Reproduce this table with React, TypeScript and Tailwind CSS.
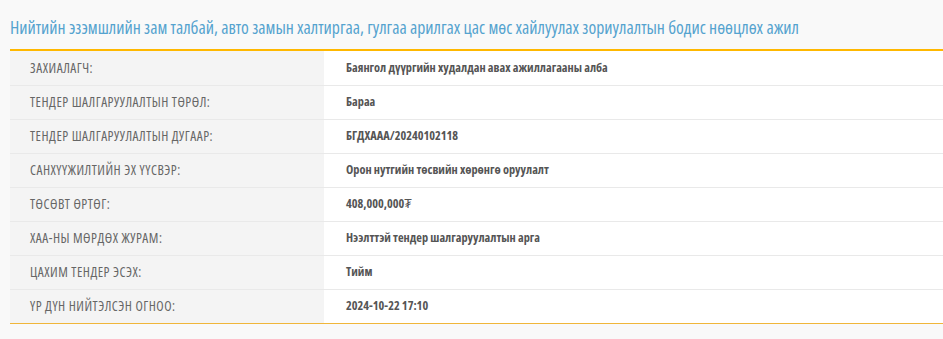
import React from "react";

const rows: [string, React.ReactNode][] = [
  ["ЗАХИАЛАГЧ:", "Баянгол дүүргийн худалдан авах ажиллагааны алба"],
  ["ТЕНДЕР ШАЛГАРУУЛАЛТЫН ТӨРӨЛ:", "Бараа"],
  ["ТЕНДЕР ШАЛГАРУУЛАЛТЫН ДУГААР:", "БГДХААА/20240102118"],
  ["САНХҮҮЖИЛТИЙН ЭХ ҮҮСВЭР:", "Орон нутгийн төсвийн хөрөнгө оруулалт"],
  [
    "ТӨСӨВТ ӨРТӨГ:",
    <>
      408,000,000<span className="font-normal">₮</span>
    </>,
  ],
  ["ХАА-НЫ МӨРДӨХ ЖУРАМ:", "Нээлттэй тендер шалгаруулалтын арга"],
  ["ЦАХИМ ТЕНДЕР ЭСЭХ:", "Тийм"],
  ["ҮР ДҮН НИЙТЭЛСЭН ОГНОО:", "2024-10-22 17:10"],
];

export default function App() {
  return (
    <div className="min-h-[339px] w-[943px] bg-[#f9f9f9] pl-[10px] font-['Open_Sans',sans-serif]">
      <div className="h-[49px] pt-[15px] text-[17.7px] leading-[24px] text-[#55a3cf] whitespace-nowrap font-stretch-[75%]">
        Нийтийн эзэмшлийн зам талбай, авто замын халтиргаа, гулгаа арилгах цас мөс хайлуулах зориулалтын бодис нөөцлөх ажил
      </div>
      <div className="border-t-2 border-b border-t-[#ffb800] border-b-[#f0b63a]">
        {rows.map(([k, v], i) => (
          <div
            key={i}
            className={"flex h-[34px] items-center " + (i > 0 ? "border-t border-[#e9e9e9]" : "")}
          >
            <div className="flex h-full w-[314px] items-center bg-[#f4f4f4] pl-[20px] text-[13.5px] tracking-[0.5px] text-[#666666] font-stretch-[75%]">
              {k}
            </div>
            <div className="flex h-full flex-1 items-center bg-white pl-[22px] text-[12.3px] font-bold text-[#555555] font-stretch-[75%]">
              {v}
            </div>
          </div>
        ))}
      </div>
    </div>
  );
}
